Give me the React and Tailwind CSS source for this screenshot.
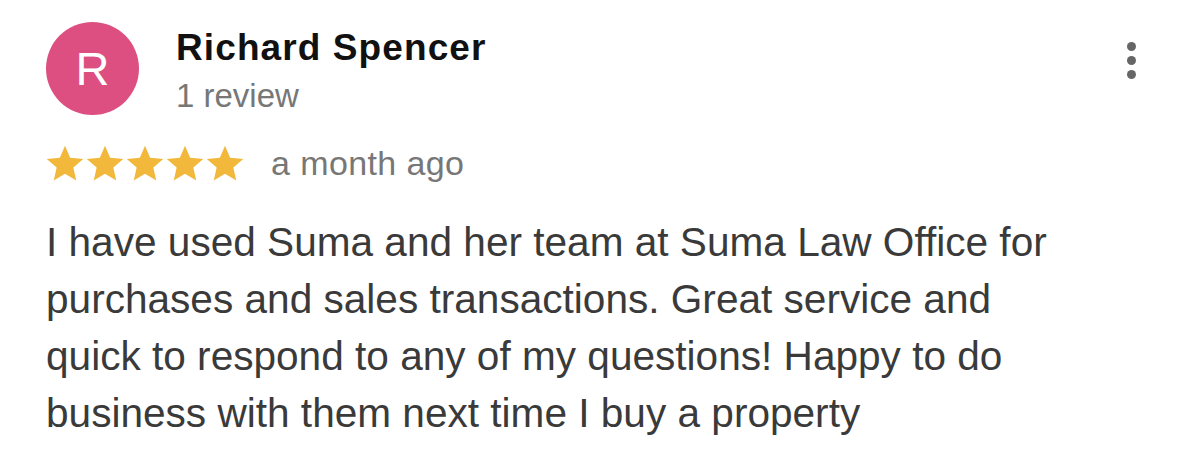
import React from "react";

function Star() {
  return (
    <svg viewBox="0 0 24 24" className="w-[40px] h-[40px]" fill="#f1b83b">
      <path d="M12 1.6l3.09 7.26 7.86.7-5.96 5.2 1.78 7.69L12 18.4l-6.77 4.05 1.78-7.69-5.96-5.2 7.86-.7z" />
    </svg>
  );
}

export default function App() {
  return (
    <div className="w-[1200px] h-[466px] bg-white pl-[46px] pr-[64px] pt-[22px]" style={{ fontFamily: '"Liberation Sans", Arial, sans-serif' }}>
      <div className="flex items-start justify-between">
        <div className="flex items-start">
          <div className="w-[93px] h-[93px] rounded-full bg-[#dc4f80] flex items-center justify-center text-white text-[47px] leading-none">
            R
          </div>
          <div className="ml-[37px] mt-[4px] flex flex-col">
            <div className="text-[37px] leading-[44px] font-bold text-[#111111] tracking-[1.1px]">Richard Spencer</div>
            <div className="mt-[6px] text-[33px] leading-[40px] text-[#777777]">1 review</div>
          </div>
        </div>
        <div className="mt-[20px] flex flex-col gap-[5px] items-center">
          <span className="w-[9px] h-[9px] rounded-full bg-[#666666]" />
          <span className="w-[9px] h-[9px] rounded-full bg-[#666666]" />
          <span className="w-[9px] h-[9px] rounded-full bg-[#666666]" />
        </div>
      </div>
      <div className="mt-[27px] flex items-center">
        <div className="flex -ml-[1px]">
          <Star />
          <Star />
          <Star />
          <Star />
          <Star />
        </div>
        <span className="ml-[26px] text-[34px] leading-[40px] text-[#777777] tracking-[0.4px]">a month ago</span>
      </div>
      <p className="mt-[31px] text-[40.6px] leading-[57px] text-[#3a3a3a] w-[1020px]">
        I have used Suma and her team at Suma Law Office for purchases and sales transactions. Great service and quick to respond to any of my questions! Happy to do business with them next time I buy a property
      </p>
    </div>
  );
}
